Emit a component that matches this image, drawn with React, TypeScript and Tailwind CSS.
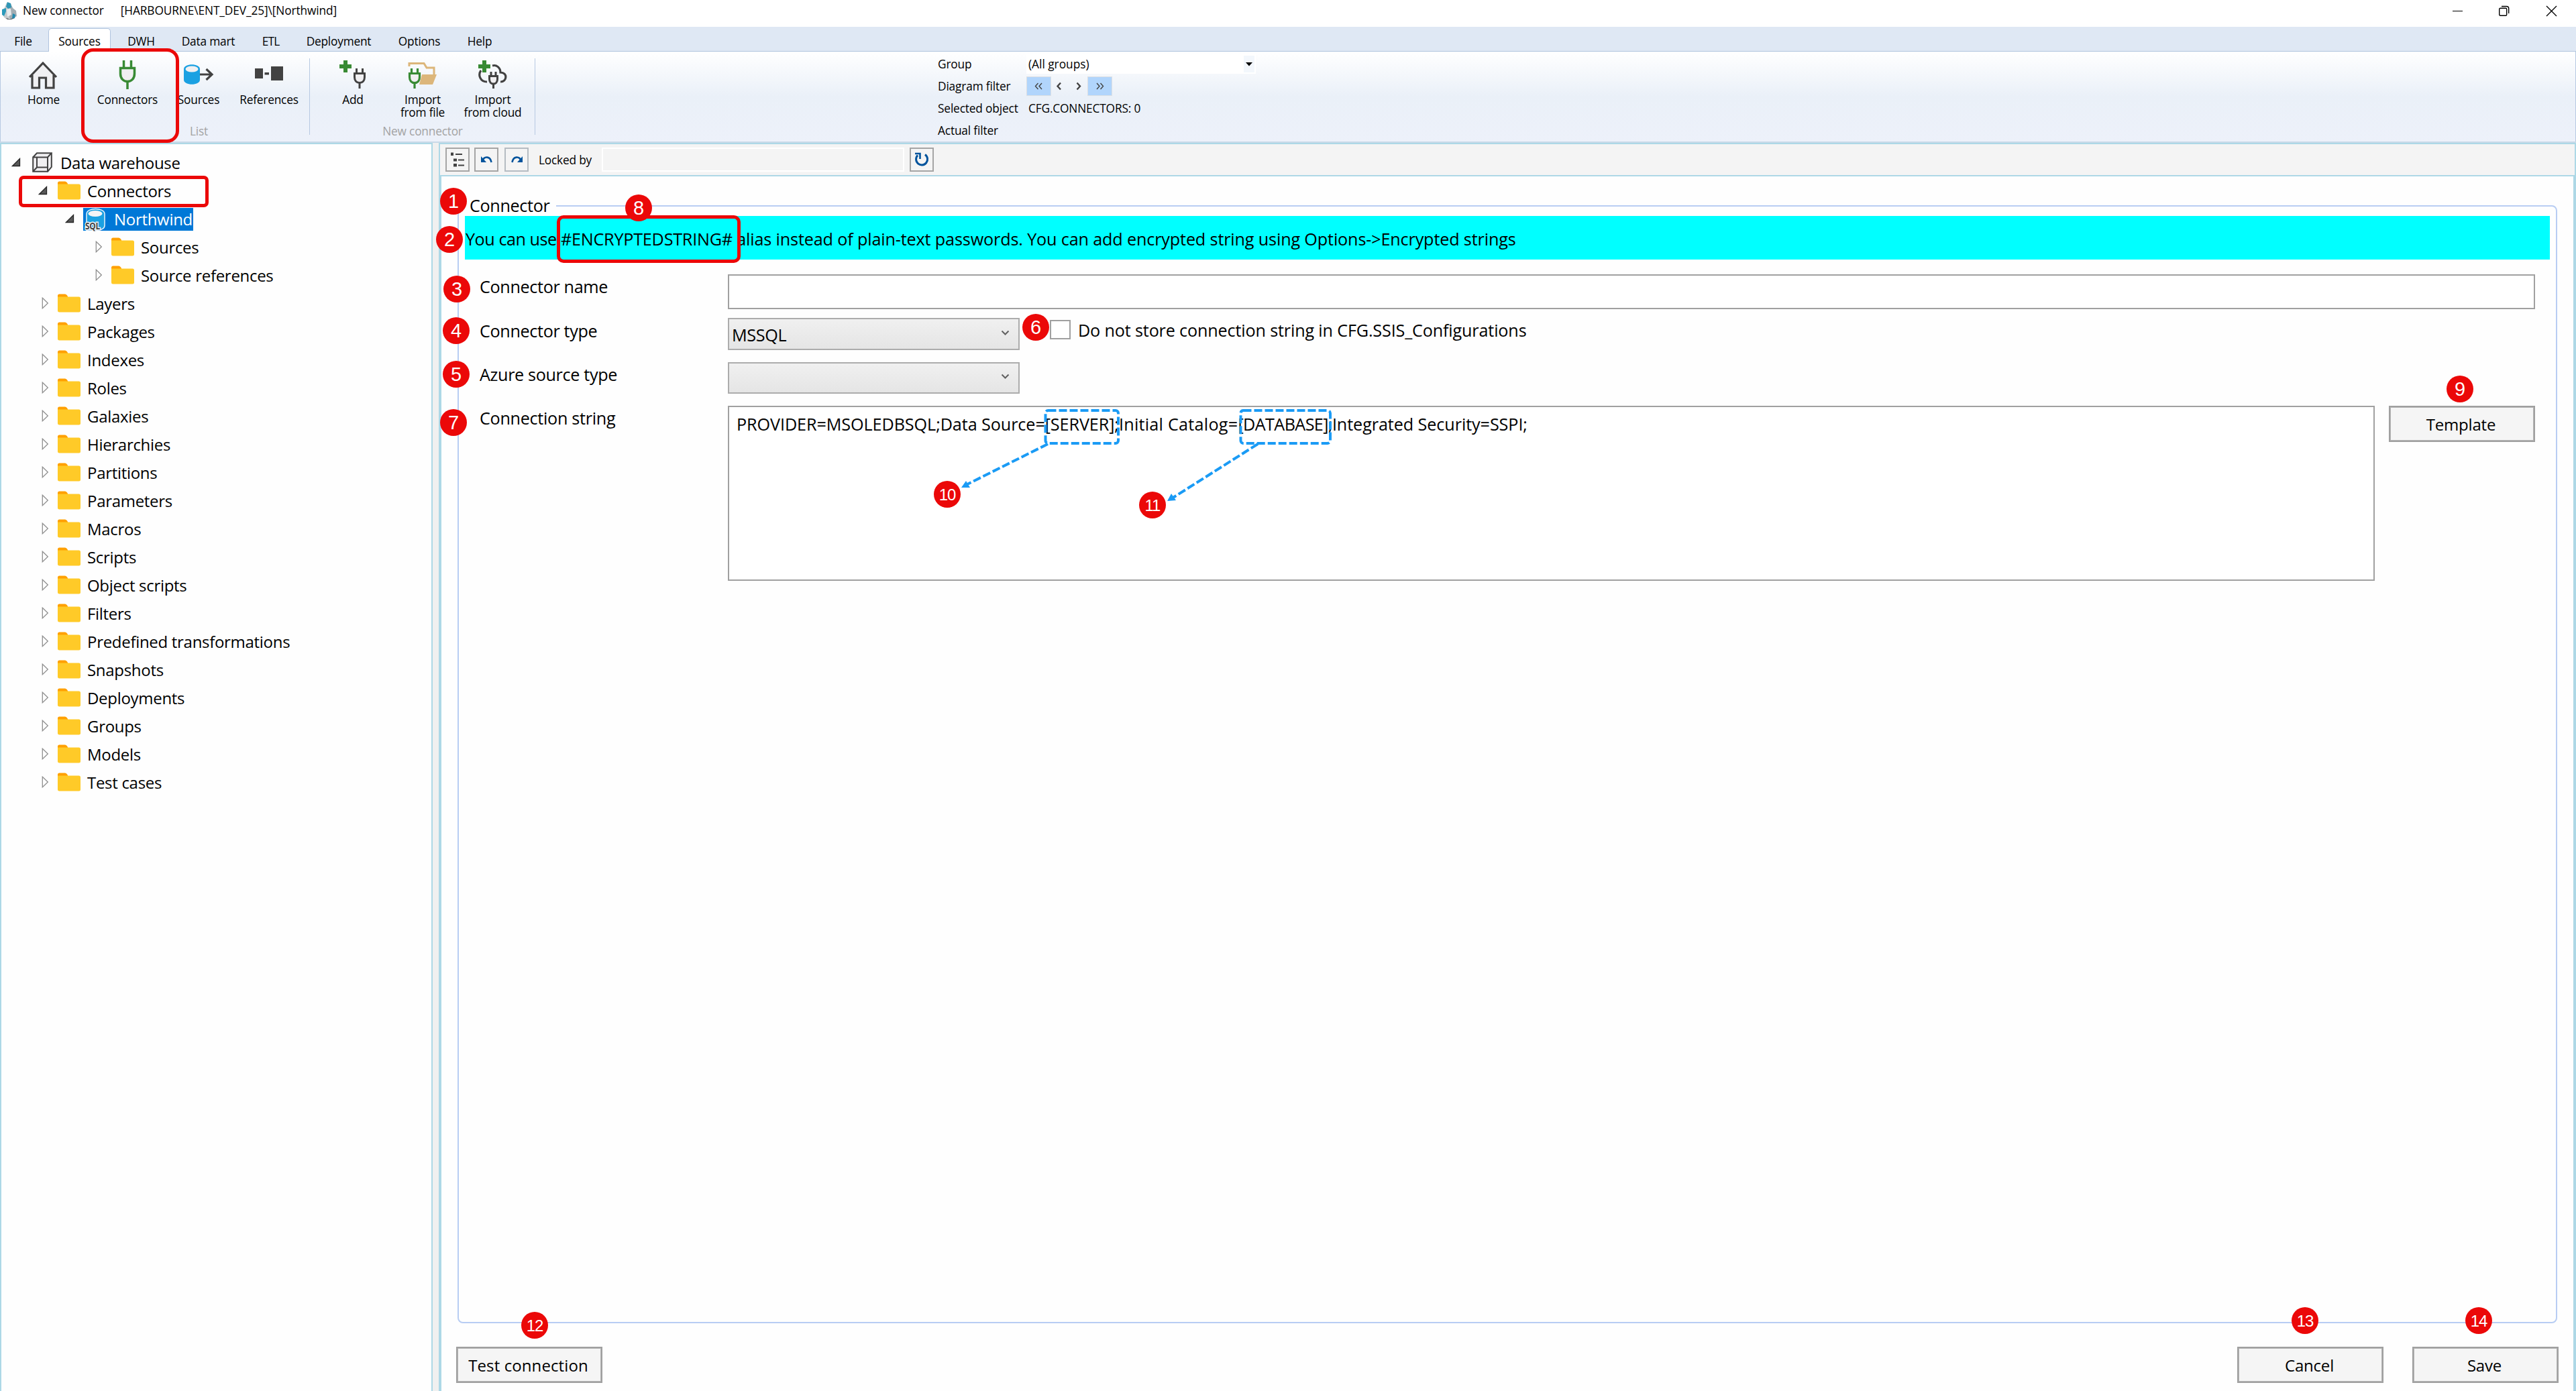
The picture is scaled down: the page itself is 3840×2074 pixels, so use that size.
import React from "react";
import clsx from "clsx";

type IconProps = { className?: string };

function AppLogo() {
  return (
    <svg width="24" height="28" viewBox="0 0 24 28" className="shrink-0">
      <path d="M8 2l6 1 3 7-3 14-5 2-5-2-3-9 4-6z" fill="#c3c9cc" />
      <path d="M13 3l4 7 5 4 1 8-6 4-5-1z" fill="#a3adb2" />
      <path d="M9 1l5 2 1 6-5 2-3-3z" fill="#2f95b5" />
      <path d="M1 12l6-2v5l-3 7-3-2z" fill="#2b9abb" />
      <path d="M17 18l4 2-1 5-4 1z" fill="#2389ad" />
      <path d="M8 12l6-1 1 9-6 3z" fill="#e9ecee" />
      <path d="M6 25l6 1 8-1-5 2H9z" fill="#4b5559" />
    </svg>
  );
}

function HomeIcon() {
  return (
    <svg width="44" height="44" viewBox="0 0 44 44">
      <path d="M5 22V41H15V26H26V41H37V22L21 4z" fill="#f0f0f2" />
      <path
        d="M1 25L21 4L41 25M5 22V41H15.500V26H25.500V41H37V22"
        fill="none"
        stroke="#424242"
        strokeWidth="3.200"
      />
    </svg>
  );
}

function ConnectorIcon() {
  return (
    <svg width="26" height="44" viewBox="0 0 26 44">
      <g stroke="#388a34" strokeWidth="3.500">
        <path d="M7.500 0V11M18.500 0V11" />
        <path d="M2.500 11.500H23.500V20C23.500 27 19 31.500 13 31.500S2.500 27 2.500 20z" fill="#f0eff1" />
        <path d="M13 31V43" />
      </g>
    </svg>
  );
}

function SourcesIcon() {
  return (
    <svg width="46" height="44" viewBox="0 0 46 44">
      <path d="M1 13C1 4 25 4 25 13V29C25 38 1 38 1 29z" fill="#1ba1e2" />
      <ellipse cx="13" cy="13" rx="9.500" ry="4.500" fill="#f0f0f2" />
      <path d="M25 21H43M34.500 13L43 21L34.500 29" fill="none" stroke="#424242" strokeWidth="3.200" />
    </svg>
  );
}

function ReferencesIcon() {
  return (
    <svg width="42" height="44" viewBox="0 0 42 44">
      <path d="M0 12H12V27H0zM14.500 18H21V21.500H14.500zM24 9H42V30H24z" fill="#424242" />
    </svg>
  );
}

function Plus() {
  return <path d="M6 0H12V6H18V12H12V18H6V12H0V6H6z" fill="#388a34" />;
}

function SmallPlug() {
  return (
    <>
      <path d="M4.500 0V7M13.500 0V7" />
      <path d="M1.500 7.500H16.500V13C16.500 18.500 13.500 21.500 9 21.500S1.500 18.500 1.500 13z" fill="#f0eff1" />
      <path d="M9 21V30" />
    </>
  );
}

function AddIcon() {
  return (
    <svg width="40" height="44" viewBox="0 0 40 44">
      <Plus />
      <g transform="translate(21 12)" stroke="#424242" strokeWidth="3">
        <SmallPlug />
      </g>
    </svg>
  );
}

function ImportFileIcon() {
  return (
    <svg width="44" height="44" viewBox="0 0 44 44">
      <path d="M2 9V4.500H24L28 11H39V22" fill="none" stroke="#dcb67a" strokeWidth="3" />
      <path d="M21 21H43L37 36H17z" fill="#dcb67a" />
      <g transform="translate(1 12)" stroke="#388a34" strokeWidth="3.200">
        <SmallPlug />
      </g>
    </svg>
  );
}

function ImportCloudIcon() {
  return (
    <svg width="44" height="44" viewBox="0 0 44 44">
      <path
        d="M4 15C-1 22 3 32 13 32M21 8C27 6 33 11 33 18C44 18 43 32 33 32"
        fill="none"
        stroke="#424242"
        strokeWidth="3.200"
      />
      <Plus />
      <g transform="translate(15 17)" stroke="#424242" strokeWidth="3">
        <path d="M4 0V5M11 0V5" />
        <path d="M1.500 6.500H13.500V11C13.500 15.500 11 18 7.500 18S1.500 15.500 1.500 11z" fill="#f0eff1" />
        <path d="M7.500 18V25" />
      </g>
    </svg>
  );
}

function FolderIcon({ className }: IconProps) {
  return (
    <svg width="34" height="28" viewBox="0 0 34 28" className={className}>
      <path d="M0 3Q0 0.500 2.500 0.500H11Q13 0.500 14.500 3L16 7H0z" fill="#ffa000" />
      <path d="M0 4.500H31.500Q34 4.500 34 7V25Q34 27.500 31.500 27.500H2.500Q0 27.500 0 25z" fill="#ffca28" />
    </svg>
  );
}

function CubeIcon() {
  return (
    <svg width="30" height="30" viewBox="0 0 30 30">
      <path d="M1.200 7.500L7 1.200H28.800V22L23 28.800H1.200z" fill="#f0eff1" />
      <path
        d="M1.200 7.500H23V28.800H1.200zM1.200 7.500L7 1.200H28.800L23 7.500M28.800 1.200V22L23 28.800M7 7.500V22.500M7 22.500H23M7 22.500L1.200 28.800"
        fill="none"
        stroke="#424242"
        strokeWidth="2"
      />
    </svg>
  );
}

function SqlIcon() {
  return (
    <svg width="33" height="35" viewBox="0 0 33 35">
      <path
        d="M3 9C3 -1 30 -1 30 9V26C30 32 24 33 17 33H3z"
        fill="#1ba1e2"
        stroke="#e8f2fa"
        strokeWidth="1.500"
      />
      <ellipse cx="16" cy="8.500" rx="10.500" ry="4.500" fill="#f4f4f6" />
      <text
        x="1"
        y="31.500"
        fontFamily="Open Sans"
        fontSize="14.500"
        fontWeight="700"
        fill="#424242"
        stroke="#f4f4f6"
        strokeWidth="3"
        paintOrder="stroke"
        textLength="22"
        lengthAdjust="spacingAndGlyphs"
      >
        SQL
      </text>
    </svg>
  );
}

function Expander({ open }: { open?: boolean }) {
  return open ? (
    <svg width="14" height="14" viewBox="0 0 14 14">
      <path d="M12.500 1.500V12.500H1.500z" fill="#595959" stroke="#262626" strokeWidth="1.300" />
    </svg>
  ) : (
    <svg width="11" height="18" viewBox="0 0 11 18">
      <path d="M1.300 1.300L9.300 9L1.300 16.700z" fill="#fff" stroke="#8f8f8f" strokeWidth="1.300" />
    </svg>
  );
}

const tabs = [
  { label: "File", width: "w-[69px]" },
  { label: "Sources", width: "w-[93px] ml-[3px]", active: true },
  { label: "DWH", width: "w-[91px]" },
  { label: "Data mart", width: "w-[109px]" },
  { label: "ETL", width: "w-[77px] tracking-[-0.8px]" },
  { label: "Deployment", width: "w-[126px]" },
  { label: "Options", width: "w-[114px]" },
  { label: "Help", width: "w-[66px]" },
];

const folders = [
  "Layers",
  "Packages",
  "Indexes",
  "Roles",
  "Galaxies",
  "Hierarchies",
  "Partitions",
  "Parameters",
  "Macros",
  "Scripts",
  "Object scripts",
  "Filters",
  "Predefined transformations",
  "Snapshots",
  "Deployments",
  "Groups",
  "Models",
  "Test cases",
];

function TitleBar() {
  return (
    <header className="flex h-10 items-start justify-between bg-white pl-[2px] pt-[2px] tracking-[-0.1px]">
      <div className="flex items-start">
        <AppLogo />
        <span className="ml-[8px] mt-[2px] leading-6">New connector</span>
        <span className="ml-[25px] mt-[2px] leading-6">[HARBOURNE\ENT_DEV_25]\[Northwind]</span>
      </div>
      <div className="mr-[28px] mt-[6px] flex gap-[51px]">
        <svg width="17" height="17" viewBox="0 0 17 17" className="mr-px">
          <path d="M0 8.500H15" stroke="#000" />
        </svg>
        <svg width="17" height="17" viewBox="0 0 17 17" fill="none" stroke="#000" strokeWidth="1.400">
          <rect x="0.700" y="4.200" width="11" height="11" rx="1.500" />
          <path d="M4 1.500H11.500Q14.700 1.500 14.700 4.500V12" />
        </svg>
        <svg width="17" height="17" viewBox="0 0 17 17" className="ml-[2px]">
          <path d="M1 1L16 16M16 1L1 16" stroke="#000" strokeWidth="1.400" />
        </svg>
      </div>
    </header>
  );
}

function RibbonButton({ icon, label, className }: { icon: React.ReactNode; label: string; className: string }) {
  return (
    <button className={clsx("flex flex-col items-center pt-[13px]", className)}>
      {icon}
      <span className="mt-[5px] whitespace-pre-line text-center leading-[19px]">{label}</span>
    </button>
  );
}

function FilterButton({ d, wide }: { d: string; wide?: boolean }) {
  return (
    <button
      className={clsx(
        "flex h-[29px] items-center justify-center",
        wide ? "w-[37px] border border-[#dcdfe3] bg-[#b1d5fc]" : "w-[27px]"
      )}
    >
      <svg width="15" height="13" viewBox="0 0 15 13">
        <path d={d} fill="none" stroke="#424242" strokeWidth={wide ? "1.400" : "2.400"} />
      </svg>
    </button>
  );
}

function Ribbon() {
  return (
    <section className="flex h-[134px] border-x border-[#b7c9e2] bg-linear-to-b from-white via-[#eaf0f8] via-50% to-[#edf1fa]">
      <RibbonButton icon={<HomeIcon />} label="Home" className="w-[130px] pr-[2px]" />
      <div className="relative w-[331px]">
        <div className="flex">
          <RibbonButton icon={<ConnectorIcon />} label="Connectors" className="w-[118px]" />
          <RibbonButton icon={<SourcesIcon />} label="Sources" className="w-[94px]" />
          <RibbonButton icon={<ReferencesIcon />} label="References" className="w-[116px]" />
        </div>
        <div className="absolute inset-x-0 bottom-[3px] text-center leading-6 text-[#a3a3a3]">List</div>
      </div>
      <div className="-ml-px mt-[10px] h-[114px] w-px bg-[#b7c9e2]" />
      <div className="relative w-[335px]">
        <div className="flex pl-[12px]">
          <RibbonButton icon={<AddIcon />} label="Add" className="w-[104px]" />
          <RibbonButton icon={<ImportFileIcon />} label={"Import\nfrom file"} className="w-[104px]" />
          <RibbonButton icon={<ImportCloudIcon />} label={"Import\nfrom cloud"} className="w-[105px]" />
        </div>
        <div className="absolute inset-x-0 bottom-[3px] pl-px text-center leading-6 text-[#a3a3a3]">New connector</div>
      </div>
      <div className="mt-[10px] h-[114px] w-px bg-[#b7c9e2]" />
      <div className="ml-[600px] grid grid-cols-[132px_342px] grid-rows-[33px_33px_33px_33px] items-center pt-[2px] leading-6 tracking-[-0.15px]">
        <span>Group</span>
        <div className="flex h-[29px] items-center justify-between bg-white pl-[3px] pr-[2px]">
          <span className="tracking-normal">(All groups)</span>
          <span className="flex h-[25px] w-4 items-center justify-center bg-[#f3f7fc]">
            <svg width="10" height="6" viewBox="0 0 10 6">
              <path d="M0 0H10L5 5.500z" />
            </svg>
          </span>
        </div>
        <span>Diagram filter</span>
        <div className="flex items-center">
          <FilterButton wide d="M6.500 2L2.500 6.500L6.500 11M12 2L8 6.500L12 11" />
          <FilterButton d="M8 1.500L3.500 6.500L8 11.500" />
          <FilterButton d="M5.500 1.500L10 6.500L5.500 11.500" />
          <FilterButton wide d="M3 2L7 6.500L3 11M8.500 2L12.500 6.500L8.500 11" />
        </div>
        <span>Selected object</span>
        <span className="pl-[3px]">CFG.CONNECTORS: 0</span>
        <span>Actual filter</span>
      </div>
    </section>
  );
}

function TreeFolder({ label, nested }: { label: string; nested?: boolean }) {
  return (
    <li className={clsx("flex h-[42px] items-center", nested ? "pl-[140px]" : "pl-[60px]")}>
      <Expander />
      <FolderIcon className="ml-[13px]" />
      <span className="ml-[10px] pt-px">{label}</span>
    </li>
  );
}

function Tree() {
  return (
    <aside className="w-[645px] shrink-0 border-2 border-b-0 border-[#add8e6] bg-[#fefefe] pt-[6px] text-[24px] tracking-[-0.3px]">
      <ul>
        <li className="flex h-[42px] items-center pl-[15px]">
          <Expander open />
          <span className="ml-[17px] mr-[12px]">
            <CubeIcon />
          </span>
          <span className="pt-px">Data warehouse</span>
        </li>
        <li className="flex h-[42px] items-center pl-[55px]">
          <Expander open />
          <FolderIcon className="ml-[15px]" />
          <span className="ml-[10px] pt-px">Connectors</span>
        </li>
        <li className="flex h-[42px] items-center pl-[95px]">
          <Expander open />
          <div className="ml-[13px] mt-[2px] flex h-[34px] items-center bg-[#0078d7] pl-[2px] pr-px text-white">
            <SqlIcon />
            <span className="ml-[11px]">Northwind</span>
          </div>
        </li>
        <TreeFolder nested label="Sources" />
        <TreeFolder nested label="Source references" />
        {folders.map((name) => (
          <TreeFolder key={name} label={name} />
        ))}
      </ul>
    </aside>
  );
}

function ToolButton({ children, className }: { children: React.ReactNode; className?: string }) {
  return (
    <button className={clsx("flex h-9 w-9 items-center justify-center border-2 border-[#a5a5a5]", className)}>
      {children}
    </button>
  );
}

function Toolbar() {
  return (
    <div className="flex h-[50px] items-center border-2 border-[#add8e6] bg-[#f4f4f4] pl-[8px]">
      <ToolButton>
        <svg width="22" height="22" viewBox="0 0 22 22" fill="#424242">
          <path d="M1 0.500H5V5H1zM8 2H18V4H8zM5 9.500H10V13.500H5zM12 10.500H21V12.500H12zM5 17H10V21.500H5zM12 18.500H21V20.500H12z" />
        </svg>
      </ToolButton>
      <ToolButton className="ml-[7px]">
        <svg width="19" height="12" viewBox="0 0 19 12">
          <path d="M3 8C6 0 15 1 16.500 10" fill="none" stroke="#00539c" strokeWidth="2.600" />
          <path d="M1 1V10H9z" fill="#00539c" />
        </svg>
      </ToolButton>
      <ToolButton className="ml-[9px] border-[#b5bcc2]">
        <svg width="19" height="12" viewBox="0 0 19 12">
          <path d="M16 8C13 0 4 1 2.500 10" fill="none" stroke="#00539c" strokeWidth="2.600" />
          <path d="M18 1V10H10z" fill="#00539c" />
        </svg>
      </ToolButton>
      <span className="ml-[15px] w-[94px] pt-px">Locked by</span>
      <div className="h-9 w-[451px] border-2 border-white" />
      <ToolButton className="ml-[8px]">
        <svg width="22" height="22" viewBox="0 0 22 22">
          <path d="M5 4.500A8.500 8.500 0 1 0 16 3.500" fill="none" stroke="#00539c" strokeWidth="3" />
          <path d="M1 2H8.500V10" fill="none" stroke="#00539c" strokeWidth="2.600" />
        </svg>
      </ToolButton>
    </div>
  );
}

function PushButton({ label, className }: { label: string; className?: string }) {
  return (
    <button
      className={clsx(
        "h-[54px] w-[218px] shrink-0 border-2 border-[#a0a0a0] bg-[#f5f5f5] pt-[2px] pr-[3px] text-[24px] shadow-[inset_0_0_0_1px_#b4b4b4]",
        className
      )}
    >
      {label}
    </button>
  );
}

function Select({ value, className }: { value?: string; className?: string }) {
  return (
    <div
      className={clsx(
        "flex w-[435px] shrink-0 items-center justify-between border-2 border-[#acacac] bg-linear-to-b from-[#f0f0f0] to-[#e5e5e5] pl-[4px] pr-[13px]",
        className
      )}
    >
      <span className="pt-[2px]">{value}</span>
      <svg width="13" height="9" viewBox="0 0 13 9" className="mb-[4px]">
        <path d="M1.500 1.500L6.500 6.500L11.500 1.500" fill="none" stroke="#606060" strokeWidth="2" />
      </svg>
    </div>
  );
}

function ConnectorForm() {
  return (
    <main className="relative grow border-x-4 border-[#add8e6] bg-[#fefefe] px-6 pt-[43px] text-[25.2px] tracking-[-0.35px]">
      <fieldset className="relative h-[1667px] rounded-lg border-2 border-[#b8cdf3] px-[9px] pt-[14px]">
        <div className="absolute -top-[20px] left-[8px] bg-[#fefefe] pl-[8px] pr-[10px] leading-9">Connector</div>
        <p className="relative flex h-[65px] items-center whitespace-pre bg-[#00ffff] pl-px pt-[5px] tracking-[-0.15px]">
          <span className="tracking-[-0.46px]">You can use </span>
          <span className="tracking-[-0.23px]">#ENCRYPTEDSTRING#</span>
          {" alias instead of plain-text passwords. You can add encrypted string using Options->Encrypted strings"}
        </p>
        <div className="mt-[22px] flex px-[22px] leading-9">
          <label className="w-[370px] shrink-0">Connector name</label>
          <input className="h-[52px] grow border-2 border-[#a0a0a0] bg-white" />
        </div>
        <div className="mt-[13px] flex pl-[22px] leading-9">
          <label className="w-[370px] shrink-0 pt-px">Connector type</label>
          <Select value="MSSQL" className="h-[48px]" />
          <span className="ml-[45px] mt-[3px] h-[29px] w-[31px] border-2 border-[#a0a0a0] bg-white" />
          <span className="ml-[11px] tracking-[-0.16px]">
            Do not store connection string in CFG.SSIS_Configurations
          </span>
        </div>
        <div className="mt-[18px] flex pl-[22px] leading-9">
          <label className="w-[370px] shrink-0">Azure source type</label>
          <Select className="h-[47px]" />
        </div>
        <div className="mt-[18px] flex pl-[22px] leading-9">
          <label className="w-[370px] shrink-0 tracking-[-0.3px]">Connection string</label>
          <div className="h-[261px] w-[2455px] shrink-0 border-2 border-[#a0a0a0] bg-white pl-[11px] pt-[7px] tracking-[-0.09px]">
            PROVIDER=MSOLEDBSQL;Data Source=[SERVER];
            <span className="tracking-[0.25px]">Initial Catalog=</span>
            <span className="tracking-[-0.6px]">[DATABASE];</span>
            Integrated Security=SSPI;
          </div>
          <div className="ml-[21px]">
            <PushButton label="Template" className="tracking-[-0.2px]" />
          </div>
        </div>
      </fieldset>
      <footer className="-mx-[2px] mt-[35px] flex">
        <PushButton label="Test connection" className="tracking-[0.1px]" />
        <div className="ml-auto flex gap-[43px]">
          <PushButton label="Cancel" className="tracking-[-0.2px]" />
          <PushButton label="Save" className="tracking-[-0.2px]" />
        </div>
      </footer>
    </main>
  );
}

const badges = [
  { n: 1, place: "left-[656px] top-[280px]" },
  { n: 2, place: "left-[650px] top-[337px]" },
  { n: 3, place: "left-[661px] top-[411px]" },
  { n: 4, place: "left-[660px] top-[473px]" },
  { n: 5, place: "left-[660px] top-[538px]" },
  { n: 6, place: "left-[1524px] top-[468px]" },
  { n: 7, place: "left-[656px] top-[610px]" },
  { n: 8, place: "left-[932px] top-[290px]" },
  { n: 9, place: "left-[3647px] top-[560px]" },
  { n: 10, place: "left-[1392px] top-[717px]" },
  { n: 11, place: "left-[1698px] top-[733px]" },
  { n: 12, place: "left-[777px] top-[1956px]" },
  { n: 13, place: "left-[3416px] top-[1949px]" },
  { n: 14, place: "left-[3675px] top-[1949px]" },
];

// Numbered callouts and highlight frames drawn over the window
function Annotations() {
  return (
    <div className="pointer-events-none absolute inset-0 font-['Liberation_Sans',Arial,sans-serif] tracking-normal">
      <div className="absolute left-[121px] top-[72px] h-[141px] w-[146px] rounded-[18px] border-[5px] border-[#eb0808]" />
      <div className="absolute left-[28px] top-[262px] h-[47px] w-[283px] rounded-[7px] border-[5px] border-[#eb0808]" />
      <div className="absolute left-[830px] top-[321px] h-[71px] w-[274px] rounded-[10px] border-[5px] border-[#eb0808]" />
      <svg className="absolute left-[1400px] top-[600px]" width="600" height="160" viewBox="0 0 600 160">
        <g fill="none" stroke="#1a9bf5" strokeWidth="4">
          <rect x="158.500" y="12" width="108.500" height="49" rx="4" strokeDasharray="12 4" />
          <rect x="449.500" y="12" width="133.500" height="49" rx="4" strokeDasharray="12 4" />
          <path d="M162 62L42 122" strokeDasharray="12 4" />
          <path d="M475 62L347 143" strokeDasharray="12 4" />
        </g>
        <path d="M33 127L40 117L46 127z" fill="#1a9bf5" />
        <path d="M340 147L346 136L353 146z" fill="#1a9bf5" />
      </svg>
      {badges.map(({ n, place }) => (
        <span
          key={n}
          className={clsx(
            "absolute flex h-10 w-10 items-center justify-center rounded-full bg-[#eb0808] pt-[2px] text-white",
            n > 9 ? "text-[24px] tracking-[-1px]" : "text-[29px]",
            place
          )}
        >
          {n}
        </span>
      ))}
    </div>
  );
}

export default function App() {
  return (
    <div className="relative flex h-[2074px] w-[3840px] flex-col overflow-hidden bg-[#f0f0f0] font-['Open_Sans','Noto_Sans',sans-serif] text-[17.3px] tracking-[-0.2px] text-black">
      <TitleBar />
      <nav className="flex h-[37px] border-b border-[#b0c4de] bg-[#dfe8f4] pt-[2px]">
        {tabs.map((tab) => (
          <button
            key={tab.label}
            className={clsx(
              "leading-[26px]",
              tab.width,
              tab.active
                ? "-mb-px rounded-t-[5px] border border-b-0 border-[#b0c4de] bg-white pt-[4px]"
                : "pt-[5px]"
            )}
          >
            {tab.label}
          </button>
        ))}
      </nav>
      <Ribbon />
      <div className="h-[2px] bg-[#c9d9e8]" />
      <div className="flex min-h-0 grow">
        <Tree />
        <div className="ml-[9px] flex grow flex-col">
          <Toolbar />
          <ConnectorForm />
        </div>
      </div>
      <Annotations />
    </div>
  );
}
